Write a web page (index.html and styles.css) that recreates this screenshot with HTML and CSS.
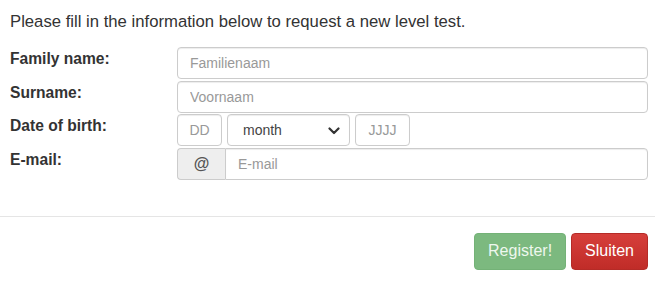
FILE: index.html
```html
<!DOCTYPE html>
<html lang="en">
<head>
<meta charset="utf-8">
<title>Level test request</title>
<link rel="stylesheet" href="styles.css">
</head>
<body>
<div class="modal-body">
  <p class="intro">Please fill in the information below to request a new level test.</p>
  <form class="form">
    <div class="row">
      <label class="label" for="fam">Family name:</label>
      <input class="control" id="fam" type="text" placeholder="Familienaam">
    </div>
    <div class="row">
      <label class="label" for="sur">Surname:</label>
      <input class="control" id="sur" type="text" placeholder="Voornaam">
    </div>
    <div class="row">
      <label class="label" for="dd">Date of birth:</label>
      <div class="date">
        <input class="control small dd" id="dd" type="text" placeholder="DD">
        <div class="select-wrap">
          <select class="control select">
            <option>month</option>
          </select>
          <svg class="chevron" width="12" height="8" viewBox="0 0 12 8"><polyline points="1.5,1.5 6,6 10.5,1.5" fill="none" stroke="#333" stroke-width="2.2" stroke-linecap="round" stroke-linejoin="round"/></svg>
        </div>
        <input class="control small yyyy" type="text" placeholder="JJJJ">
      </div>
    </div>
    <div class="row">
      <label class="label" for="mail">E-mail:</label>
      <div class="group">
        <span class="addon">@</span>
        <input class="control grouped" id="mail" type="text" placeholder="E-mail">
      </div>
    </div>
  </form>
</div>
<div class="modal-footer">
  <button class="btn btn-success" type="button">Register!</button>
  <button class="btn btn-danger" type="button">Sluiten</button>
</div>
</body>
</html>
```

FILE: styles.css
```css
html, body {
  margin: 0;
  padding: 0;
  background: #fff;
}
body {
  font-family: "Liberation Sans", Arial, sans-serif;
  color: #333;
  width: 655px;
}
.modal-body {
  padding: 12px 7px 0 10px;
}
.intro {
  margin: 0;
  font-size: 16.7px;
  line-height: 20px;
  color: #333;
}
.form {
  margin-top: 15px;
  display: flex;
  flex-direction: column;
  gap: 1.5px;
}
.row {
  display: flex;
  align-items: flex-start;
}
.label {
  width: 167px;
  flex: none;
  font-weight: bold;
  font-size: 15.6px;
  line-height: 20px;
  padding-top: 2px;
  color: #333;
}
.control {
  box-sizing: border-box;
  height: 32px;
  border: 1px solid #ccc;
  border-radius: 4px;
  box-shadow: inset 0 1px 1px rgba(0,0,0,.075);
  font-family: "Liberation Sans", Arial, sans-serif;
  font-size: 14px;
  color: #555;
  padding: 0 12px;
  background: #fff;
  outline: none;
}
.control::placeholder {
  color: #999;
}
.row > .control {
  flex: 1;
  min-width: 0;
}
.date {
  display: flex;
  gap: 5px;
}
.small {
  text-align: center;
  padding: 0 4px;
}
.dd { width: 45px; }
.yyyy { width: 55px; }
.select-wrap {
  position: relative;
  width: 123px;
  height: 32px;
}
.select {
  width: 100%;
  appearance: none;
  -webkit-appearance: none;
  padding: 0 15px;
  font-size: 14px;
  color: #444;
}
.chevron {
  position: absolute;
  right: 10px;
  top: 13px;
  pointer-events: none;
}
.group {
  flex: 1;
  display: flex;
}
.addon {
  box-sizing: border-box;
  width: 48px;
  height: 32px;
  display: flex;
  align-items: center;
  justify-content: center;
  background: #eee;
  border: 1px solid #ccc;
  border-right: none;
  border-radius: 4px 0 0 4px;
  font-weight: bold;
  font-size: 16px;
  color: #555;
}
.grouped {
  flex: 1;
  border-radius: 0 4px 4px 0;
}
.modal-footer {
  margin-top: 36px;
  border-top: 1px solid #e5e5e5;
  padding: 16px 7px 0 0;
  display: flex;
  justify-content: flex-end;
  gap: 5px;
}
.btn {
  box-sizing: border-box;
  height: 37px;
  padding: 0 13px;
  font-family: "Liberation Sans", Arial, sans-serif;
  font-size: 16px;
  border-radius: 4px;
  cursor: pointer;
}
.btn-success {
  background: #7cb97f;
  border: 1px solid #74b277;
  color: #eef7ee;
}
.btn-danger {
  background: linear-gradient(#d63f3b, #c02c28);
  border: 1px solid #b52b27;
  color: #fff;
}
```
